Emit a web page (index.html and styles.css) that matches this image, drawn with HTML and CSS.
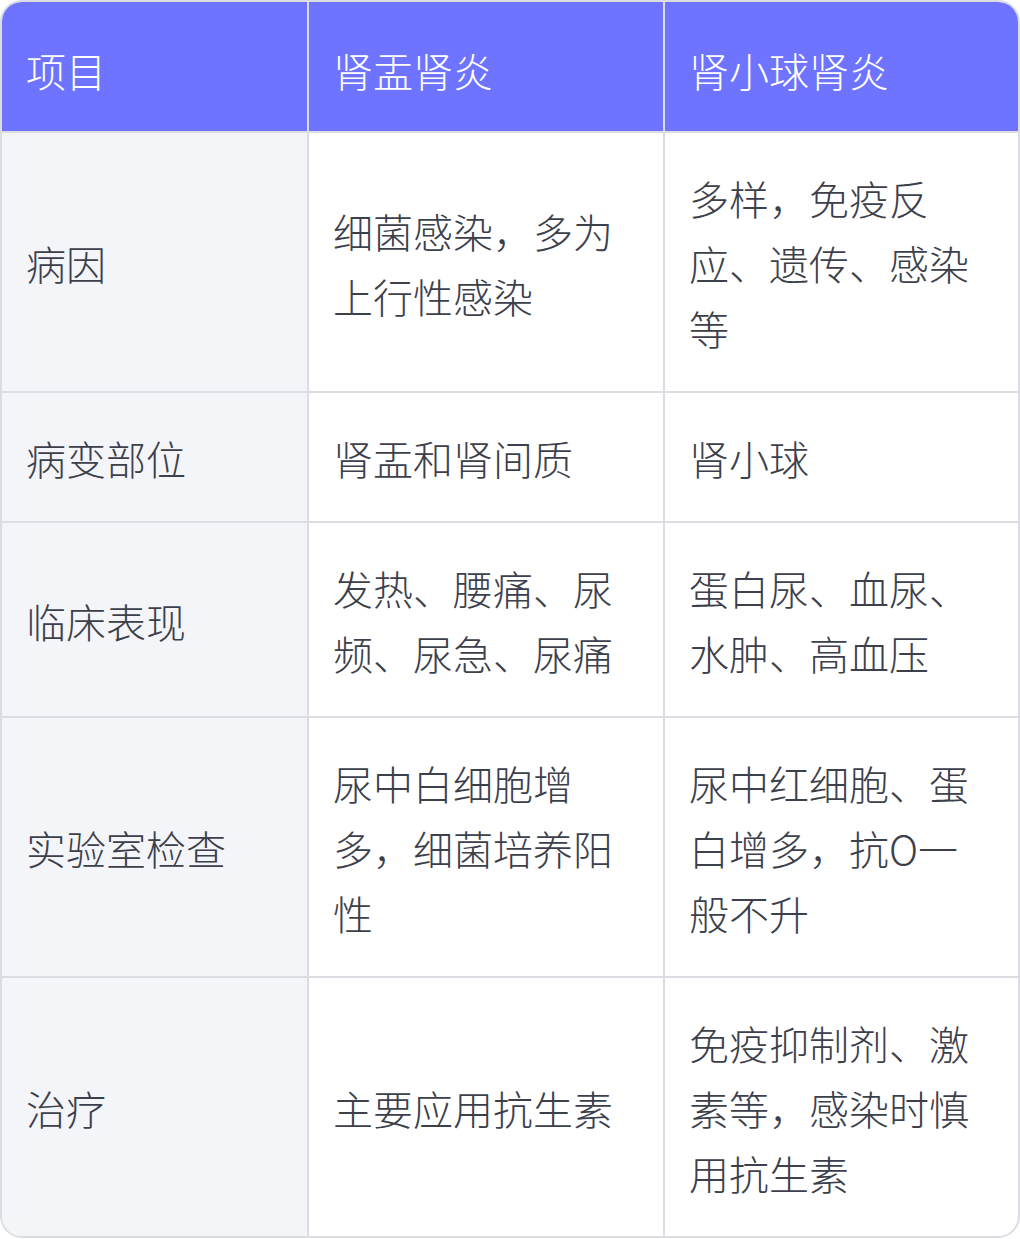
FILE: index.html
```html
<!DOCTYPE html>
<html lang="zh-CN">
<head>
<meta charset="utf-8">
<title>肾盂肾炎与肾小球肾炎对比</title>
<link rel="stylesheet" href="styles.css">
</head>
<body>
<div class="card">
  <table class="cmp">
    <colgroup>
      <col class="c1">
      <col class="c2">
      <col class="c3">
    </colgroup>
    <thead>
      <tr>
        <th>项目</th>
        <th>肾盂肾炎</th>
        <th>肾小球肾炎</th>
      </tr>
    </thead>
    <tbody>
      <tr>
        <td>病因</td>
        <td>细菌感染，多为上行性感染</td>
        <td>多样，免疫反应、遗传、感染等</td>
      </tr>
      <tr>
        <td>病变部位</td>
        <td>肾盂和肾间质</td>
        <td>肾小球</td>
      </tr>
      <tr>
        <td>临床表现</td>
        <td>发热、腰痛、尿频、尿急、尿痛</td>
        <td>蛋白尿、血尿、水肿、高血压</td>
      </tr>
      <tr>
        <td>实验室检查</td>
        <td>尿中白细胞增多，细菌培养阳性</td>
        <td>尿中红细胞、蛋白增多，抗O一般不升</td>
      </tr>
      <tr>
        <td>治疗</td>
        <td>主要应用抗生素</td>
        <td>免疫抑制剂、激素等，感染时慎用抗生素</td>
      </tr>
    </tbody>
  </table>
</div>
</body>
</html>
```

FILE: styles.css
```css
html, body {
  margin: 0;
  padding: 0;
  background: #ffffff;
}

.card {
  width: 1020px;
  box-sizing: border-box;
  border: 2px solid #dcdde3;
  border-radius: 22px;
  overflow: hidden;
  background: #ffffff;
}

.cmp {
  width: 1016px;
  table-layout: fixed;
  border-collapse: separate;
  border-spacing: 0;
  font-family: "Noto Sans CJK SC", "Noto Sans", sans-serif;
  font-size: 40px;
  line-height: 65px;
  font-weight: 300;
  color: #3c404b;
}

.c1 { width: 307px; }
.c2 { width: 356px; }
.c3 { width: 353px; }

.cmp th,
.cmp td {
  box-sizing: border-box;
  padding: 33px 24px 30px;
  text-align: left;
  vertical-align: middle;
  font-weight: 300;
  border-right: 2px solid #dcdde3;
  border-bottom: 2px solid #dcdde3;
  line-break: strict;
}

.cmp th:last-child,
.cmp td:last-child {
  border-right: none;
}

.cmp tbody tr:last-child td {
  border-bottom: none;
}

.cmp th {
  background: #6e74ff;
  color: #ffffff;
  padding-top: 36px;
  padding-bottom: 28px;
}

.cmp td:first-child {
  background: #f4f5f9;
}
```
